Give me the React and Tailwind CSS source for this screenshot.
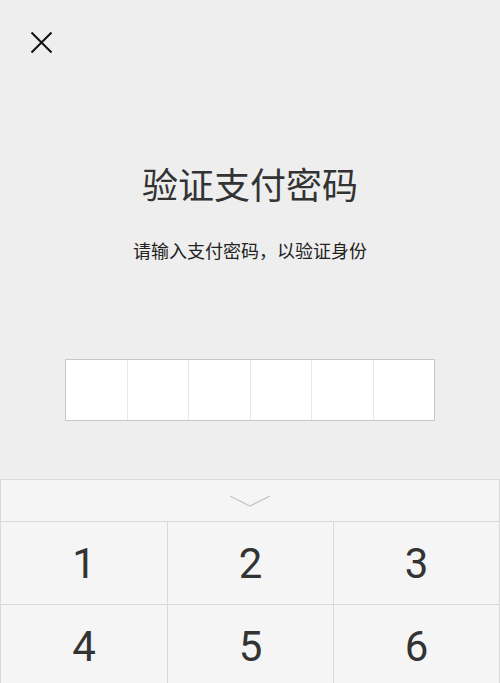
import React from 'react';

const rows = [
  ['1', '2', '3'],
  ['4', '5', '6'],
  ['7', '8', '9'],
  ['', '0', ''],
];

export default function App() {
  return (
    <div
      className="w-[500px] h-[683px] overflow-hidden bg-[#eeeeee] flex flex-col"
      style={{ fontFamily: 'Roboto, "Noto Sans CJK SC", sans-serif' }}
    >
      <div className="h-[479px] shrink-0 flex flex-col">
        <div className="pt-[31px] pl-[30px]">
          <svg width="23" height="23" viewBox="0 0 23 23" fill="none" stroke="#111" strokeWidth="2">
            <path d="M1.5 1.5 L21.5 21.5 M21.5 1.5 L1.5 21.5" />
          </svg>
        </div>
        <h1 className="mt-[112px] text-center text-[36px] leading-[43px] text-[#333333] font-normal">
          验证支付密码
        </h1>
        <p className="mt-[31px] text-center text-[18px] leading-[24px] text-[#222222]">
          请输入支付密码，以验证身份
        </p>
        <div className="mt-[95px] mx-auto w-[370px] h-[62px] border border-[#c8c8c8] bg-white flex">
          {[0, 1, 2, 3, 4, 5].map((i) => (
            <div key={i} className={`flex-1 ${i > 0 ? 'border-l border-[#e6e6e6]' : ''}`} />
          ))}
        </div>
      </div>

      <div className="flex-1 bg-[#f5f5f5] border-t border-x border-[#d9d9d9]">
        <div className="h-[41px] flex items-center justify-center">
          <svg width="42" height="14" viewBox="0 0 42 14" fill="none" stroke="#c4c4c4" strokeWidth="1.2">
            <path d="M1 2 L21 12 L41 2" />
          </svg>
        </div>
        {rows.map((row, r) => (
          <div key={r} className="h-[83px] grid grid-cols-3 border-t border-[#d9d9d9]">
            {row.map((k, c) => (
              <div
                key={c}
                className={`flex items-center justify-center text-[42px] text-[#333333] ${c > 0 ? 'border-l border-[#d9d9d9]' : ''}`}
              >
                {k}
              </div>
            ))}
          </div>
        ))}
      </div>
    </div>
  );
}
